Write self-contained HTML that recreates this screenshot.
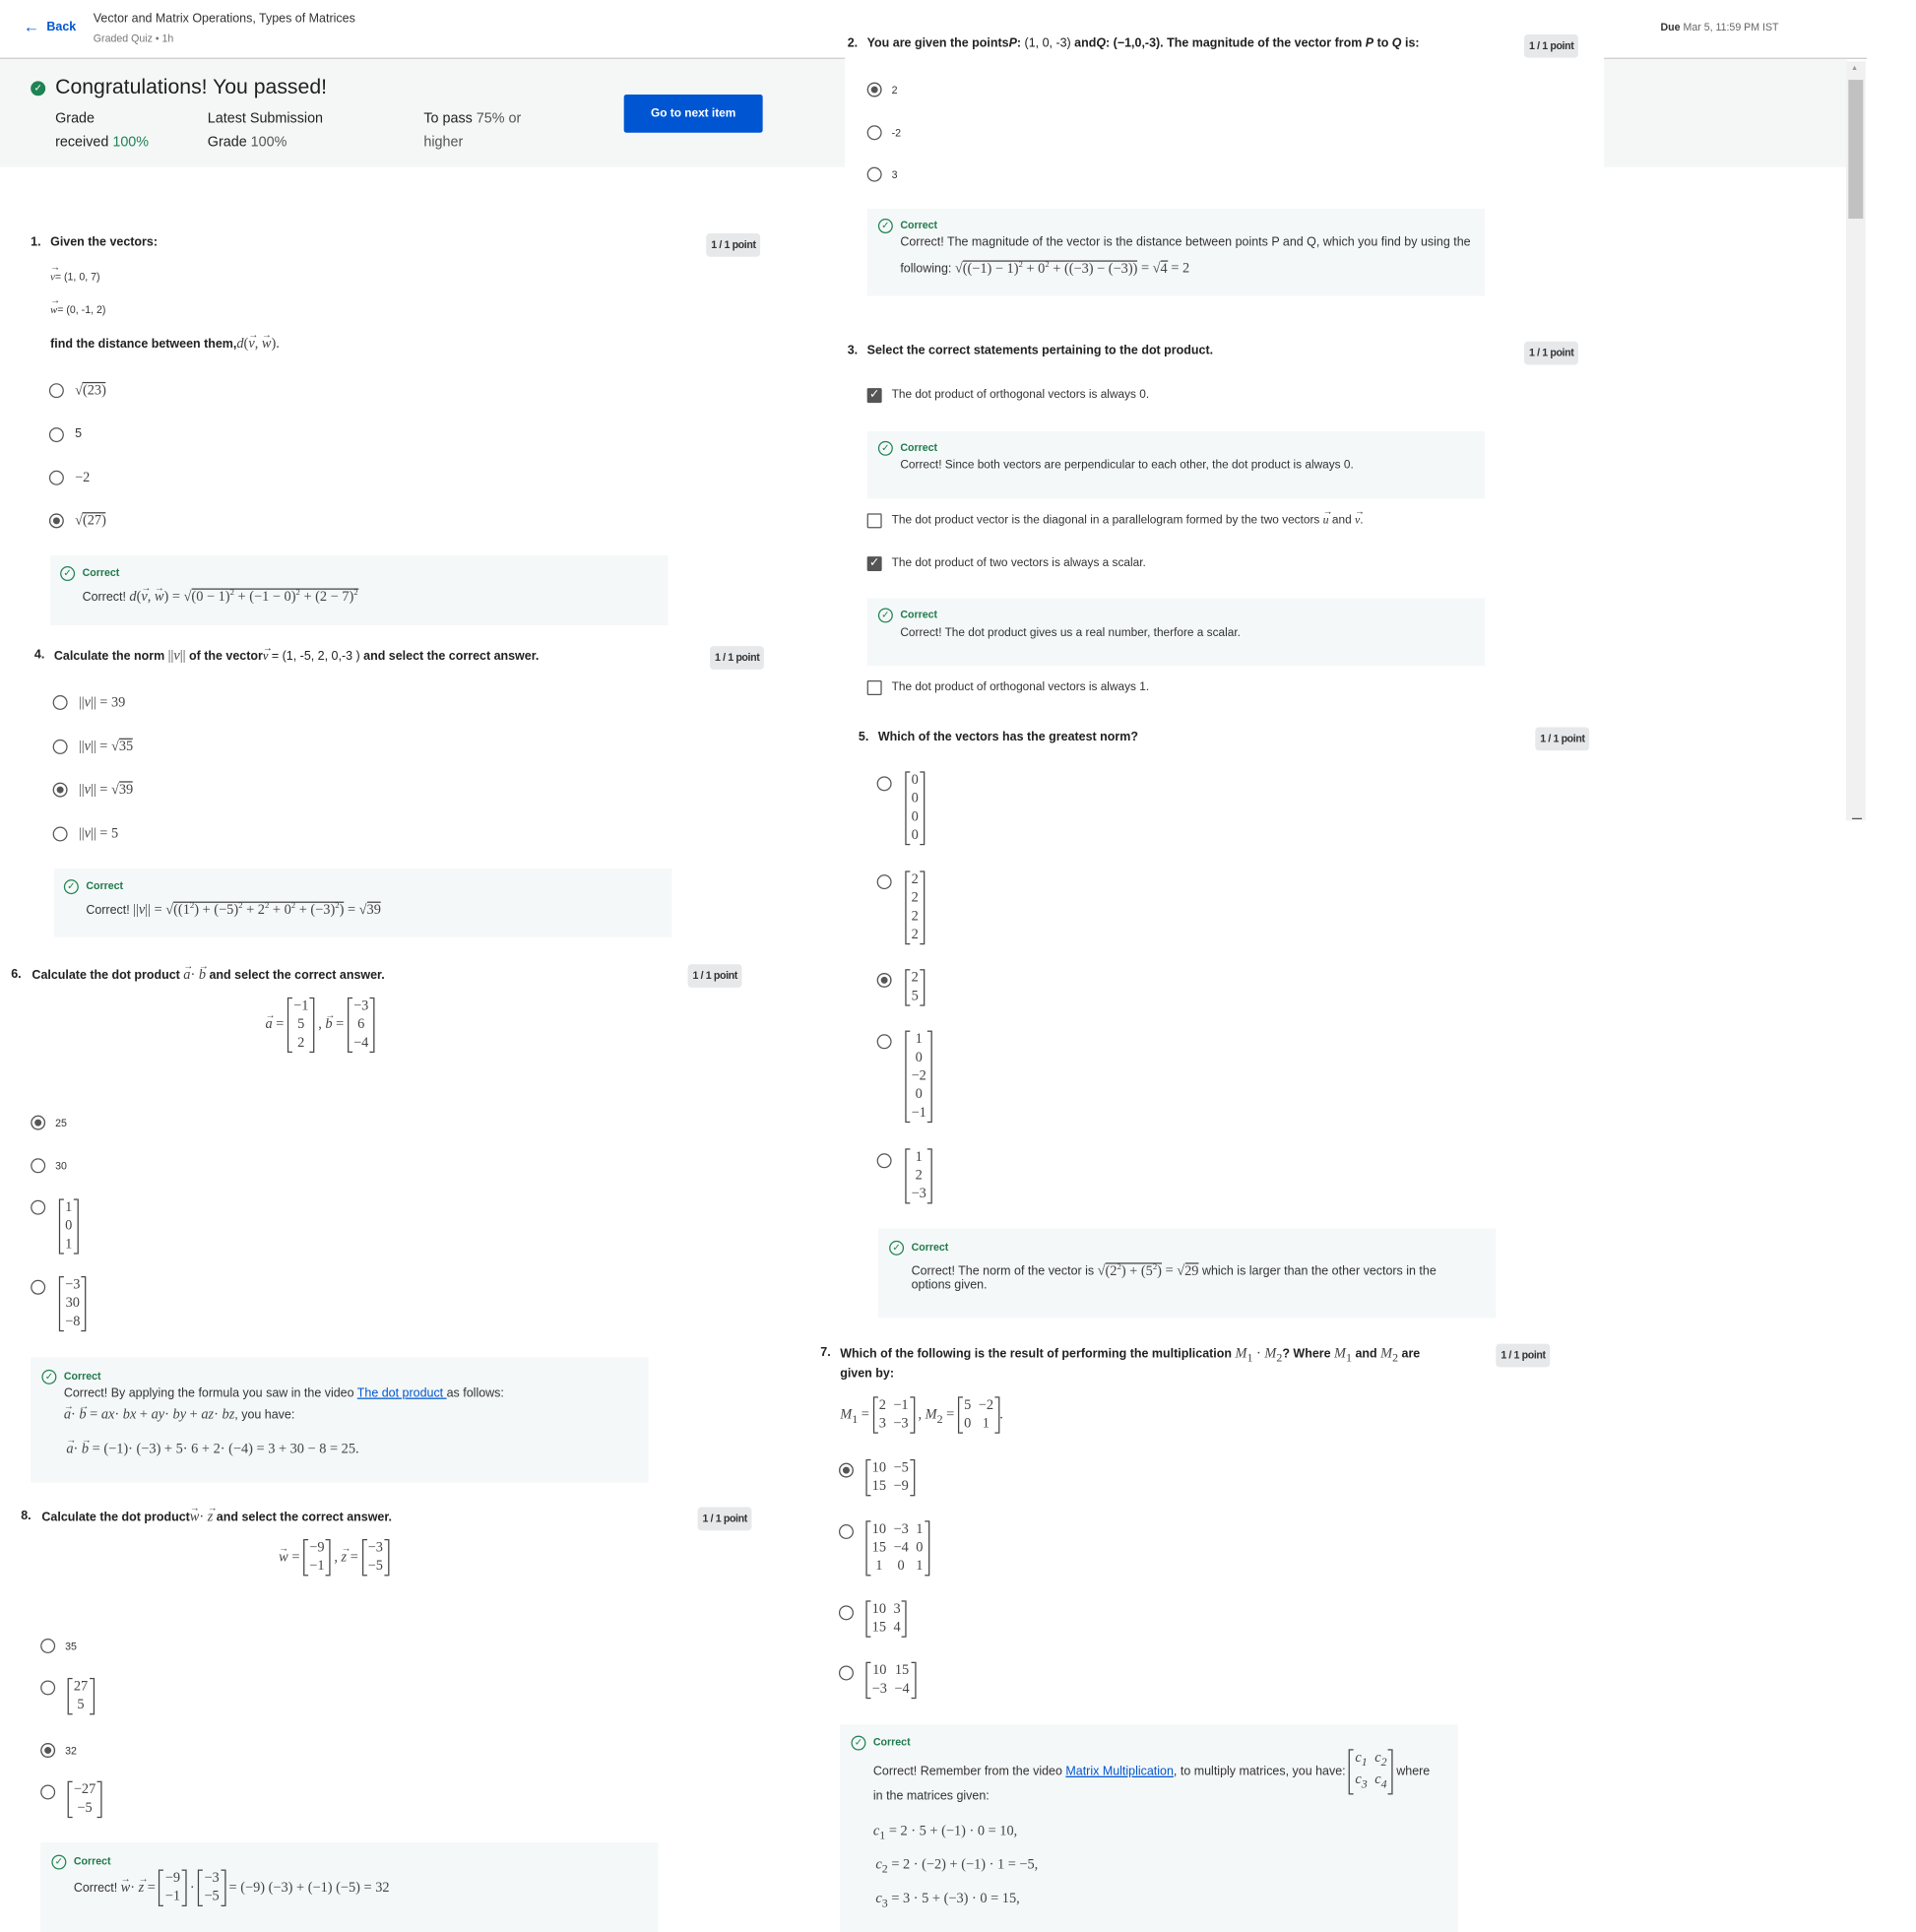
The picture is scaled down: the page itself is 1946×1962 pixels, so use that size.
<!DOCTYPE html>
<html><head><meta charset="utf-8"><style>
html,body{margin:0;padding:0;background:#fff;width:1946px;height:1962px;overflow:hidden}
#w{position:absolute;left:0;top:0;width:1560px;height:1573px;transform:scale(1.2474);transform-origin:0 0;font-family:"Liberation Sans",sans-serif;color:#333;font-size:10px;letter-spacing:0}
.a{position:absolute;white-space:nowrap;line-height:14px}
.b{font-weight:bold;color:#222}
.badge{position:absolute;background:#e6e8e9;border-radius:3px;font-size:8.5px;font-weight:bold;color:#333;height:19px;line-height:19px;padding:0 4px;letter-spacing:-0.3px}
.r{position:absolute;width:10px;height:10px;border:1.4px solid #555;border-radius:50%;box-sizing:content-box}
.r.s{background:#555;box-shadow:inset 0 0 0 2.2px #fff}
.cb{position:absolute;width:10px;height:10px;border:1.4px solid #555;border-radius:1px}
.cb.s{background:#555;color:#fff;font-size:10px;line-height:10px;text-align:center}
.fb{position:absolute;background:#f5f8f8}
.ci{position:absolute;width:10px;height:10px;border:1px solid #1f8354;border-radius:50%;color:#1f8354;font-size:8px;line-height:10px;text-align:center}
.ct{color:#1f7a4d;font-weight:bold;font-size:8.5px}
.mt{font-family:"Liberation Serif",serif;font-size:11.5px;color:#444;letter-spacing:0;font-weight:normal}
.v{position:relative;display:inline-block;font-family:"Liberation Serif",serif;font-style:italic;font-weight:normal}
.v:after{content:'→';position:absolute;left:0;top:-7px;font-size:8px;font-style:normal}
.m{display:inline-block;position:relative;border-left:1px solid #444;border-right:1px solid #444;padding:0 1px;vertical-align:middle}
.m:before,.m:after{content:'';position:absolute;top:0;bottom:0;width:3px;border-top:1px solid #444;border-bottom:1px solid #444}
.m:before{left:0}.m:after{right:0}
.m table{border-collapse:collapse;border-spacing:0}
.m td{font-family:"Liberation Serif",serif;font-size:11.5px;color:#444;padding:0 3px;line-height:15px;text-align:center}
.ol{border-top:1px solid #444}
a{color:#0056d2}
sup{font-size:7px}
</style></head><body><div id="w">

<!-- header -->
<div class="a" style="left:19px;top:15px;color:#0056d2;font-size:13px">&#8592;</div>
<div class="a" style="left:38px;top:16px;color:#0056d2;font-weight:bold;font-size:10px">Back</div>
<div class="a" style="left:76px;top:9px;font-size:10px">Vector and Matrix Operations, Types of Matrices</div>
<div class="a" style="left:76px;top:24px;font-size:8.5px;color:#777">Graded Quiz • 1h</div>
<div class="a" style="left:1352px;top:15px;font-size:8.5px"><b>Due</b> <span style="color:#666">Mar 5, 11:59 PM IST</span></div>
<div style="position:absolute;left:0;top:47px;width:688px;height:1px;background:#c8c8c8"></div>
<div style="position:absolute;left:1306px;top:47px;width:214px;height:1px;background:#c8c8c8"></div>

<!-- banner -->
<div style="position:absolute;left:0;top:48px;width:688px;height:88px;background:#f5f7f7"></div>
<div style="position:absolute;left:1306px;top:48px;width:198px;height:88px;background:#f5f7f7"></div>
<div style="position:absolute;left:25px;top:66px;width:12px;height:12px;border-radius:50%;background:#1f8354;color:#fff;font-size:8px;line-height:12px;text-align:center">✓</div>
<div class="a" style="left:45px;top:61px;font-size:17px;line-height:20px;color:#1f1f1f">Congratulations! You passed!</div>
<div class="a" style="left:45px;top:88px;font-size:11.5px;line-height:19px;color:#222">Grade<br>received <span style="color:#1f8354">100%</span></div>
<div class="a" style="left:169px;top:88px;font-size:11.5px;line-height:19px;color:#222">Latest Submission<br>Grade <span style="color:#555">100%</span></div>
<div class="a" style="left:345px;top:88px;font-size:11.5px;line-height:19px;color:#222">To pass <span style="color:#555">75% or</span><br><span style="color:#555">higher</span></div>
<div style="position:absolute;left:508px;top:77px;width:113px;height:31px;background:#0056d2;border-radius:2px;color:#fff;font-weight:bold;font-size:9.5px;text-align:center;line-height:31px">Go to next item</div>

<!-- scrollbar -->
<div style="position:absolute;left:1503px;top:50px;width:16px;height:618px;background:#f1f1f1"></div>
<div style="position:absolute;left:1505px;top:65px;width:12px;height:113px;background:#c1c1c1"></div>
<div class="a" style="left:1507px;top:49px;font-size:6px;color:#999">▲</div>
<div style="position:absolute;left:1508px;top:666px;width:8px;height:1px;background:#555"></div>

<!-- Q1 -->
<div class="a b" style="left:25px;top:191px">1.</div>
<div class="a b" style="left:41px;top:191px">Given the vectors:</div>
<div class="badge" style="left:575px;top:190px">1 / 1 point</div>
<div class="a" style="left:41px;top:218px;font-size:8.5px"><span class="v">v</span>= (1, 0, 7)</div>
<div class="a" style="left:41px;top:245px;font-size:8.5px"><span class="v">w</span>= (0, -1, 2)</div>
<div class="a b" style="left:41px;top:273px">find the distance between them,<span class="mt"><i>d</i>(<span class="v">v</span>, <span class="v">w</span>).</span></div>
<div class="r" style="left:40px;top:312px"></div><div class="a mt" style="left:61px;top:311px">√<span class="ol">(23)</span></div>
<div class="r" style="left:40px;top:348px"></div><div class="a" style="left:61px;top:347px">5</div>
<div class="r" style="left:40px;top:383px"></div><div class="a mt" style="left:61px;top:382px">−2</div>
<div class="r s" style="left:40px;top:418px"></div><div class="a mt" style="left:61px;top:417px">√<span class="ol">(27)</span></div>
<div class="fb" style="left:41px;top:452px;width:503px;height:57px"></div>
<div class="ci" style="left:49px;top:461px">✓</div><div class="a ct" style="left:67px;top:459px">Correct</div>
<div class="a" style="left:67px;top:475px">Correct! <span class="mt"><i>d</i>(<span class="v">v</span>, <span class="v">w</span>) = √<span class="ol">(0 − 1)<sup>2</sup> + (−1 − 0)<sup>2</sup> + (2 − 7)<sup>2</sup></span></span></div>

<!-- Q4 -->
<div class="a b" style="left:28px;top:527px">4.</div>
<div class="a b" style="left:44px;top:527px">Calculate the norm <span class="mt">||<i>v</i>||</span> of the vector<span class="v">v</span><span style="font-weight:normal"> = (1, -5, 2, 0,-3 )</span> and select the correct answer.</div>
<div class="badge" style="left:578px;top:526px">1 / 1 point</div>
<div class="r" style="left:43px;top:566px"></div><div class="a mt" style="left:64px;top:565px">||<i>v</i>|| = 39</div>
<div class="r" style="left:43px;top:602px"></div><div class="a mt" style="left:64px;top:601px">||<i>v</i>|| = √<span class="ol">35</span></div>
<div class="r s" style="left:43px;top:637px"></div><div class="a mt" style="left:64px;top:636px">||<i>v</i>|| = √<span class="ol">39</span></div>
<div class="r" style="left:43px;top:673px"></div><div class="a mt" style="left:64px;top:672px">||<i>v</i>|| = 5</div>
<div class="fb" style="left:44px;top:707px;width:503px;height:56px"></div>
<div class="ci" style="left:52px;top:716px">✓</div><div class="a ct" style="left:70px;top:714px">Correct</div>
<div class="a" style="left:70px;top:730px">Correct! <span class="mt">||<i>v</i>|| = √<span class="ol">((1<sup>2</sup>) + (−5)<sup>2</sup> + 2<sup>2</sup> + 0<sup>2</sup> + (−3)<sup>2</sup>)</span> = √<span class="ol">39</span></span></div>

<!-- Q6 -->
<div class="a b" style="left:9px;top:787px">6.</div>
<div class="a b" style="left:26px;top:787px">Calculate the dot product <span class="mt"><span class="v">a</span>· <span class="v">b</span></span> and select the correct answer.</div>
<div class="badge" style="left:560px;top:785px">1 / 1 point</div>
<div class="a mt" style="left:216px;top:810px;line-height:48px"><span class="v">a</span> = <span class="m"><table><tr><td>−1</td></tr><tr><td>5</td></tr><tr><td>2</td></tr></table></span> , <span class="v">b</span> = <span class="m"><table><tr><td>−3</td></tr><tr><td>6</td></tr><tr><td>−4</td></tr></table></span></div>
<div class="r s" style="left:25px;top:908px"></div><div class="a" style="left:45px;top:907px;font-size:8.5px">25</div>
<div class="r" style="left:25px;top:943px"></div><div class="a" style="left:45px;top:942px;font-size:8.5px">30</div>
<div class="r" style="left:25px;top:977px"></div><div class="a" style="left:48px;top:976px"><span class="m"><table><tr><td>1</td></tr><tr><td>0</td></tr><tr><td>1</td></tr></table></span></div>
<div class="r" style="left:25px;top:1042px"></div><div class="a" style="left:48px;top:1039px"><span class="m"><table><tr><td>−3</td></tr><tr><td>30</td></tr><tr><td>−8</td></tr></table></span></div>
<div class="fb" style="left:25px;top:1105px;width:503px;height:102px"></div>
<div class="ci" style="left:34px;top:1115px">✓</div><div class="a ct" style="left:52px;top:1113px">Correct</div>
<div class="a" style="left:52px;top:1128px">Correct! By applying the formula you saw in the video <a href="#">The dot product </a>as follows:</div>
<div class="a" style="left:52px;top:1145px"><span class="mt"><span class="v">a</span>· <span class="v">b</span> = <i>ax</i>· <i>bx</i> + <i>ay</i>· <i>by</i> + <i>az</i>· <i>bz</i></span>, you have:</div>
<div class="a mt" style="left:54px;top:1173px"><span class="v">a</span>· <span class="v">b</span> = (−1)· (−3) + 5· 6 + 2· (−4) = 3 + 30 − 8 = 25.</div>

<!-- Q8 -->
<div class="a b" style="left:17px;top:1228px">8.</div>
<div class="a b" style="left:34px;top:1228px">Calculate the dot product<span class="mt"><span class="v">w</span>· <span class="v">z</span></span> and select the correct answer.</div>
<div class="badge" style="left:568px;top:1227px">1 / 1 point</div>
<div class="a mt" style="left:227px;top:1252px;line-height:32px"><span class="v">w</span> = <span class="m"><table><tr><td>−9</td></tr><tr><td>−1</td></tr></table></span> , <span class="v">z</span> = <span class="m"><table><tr><td>−3</td></tr><tr><td>−5</td></tr></table></span></div>
<div class="r" style="left:33px;top:1334px"></div><div class="a" style="left:53px;top:1333px;font-size:8.5px">35</div>
<div class="r" style="left:33px;top:1368px"></div><div class="a" style="left:55px;top:1366px"><span class="m"><table><tr><td>27</td></tr><tr><td>5</td></tr></table></span></div>
<div class="r s" style="left:33px;top:1419px"></div><div class="a" style="left:53px;top:1418px;font-size:8.5px">32</div>
<div class="r" style="left:33px;top:1453px"></div><div class="a" style="left:55px;top:1450px"><span class="m"><table><tr><td>−27</td></tr><tr><td>−5</td></tr></table></span></div>
<div class="fb" style="left:33px;top:1500px;width:503px;height:73px"></div>
<div class="ci" style="left:42px;top:1510px">✓</div><div class="a ct" style="left:60px;top:1508px">Correct</div>
<div class="a" style="left:60px;top:1521px;line-height:32px">Correct! <span class="mt"><span class="v">w</span>· <span class="v">z</span> = <span class="m"><table><tr><td>−9</td></tr><tr><td>−1</td></tr></table></span> · <span class="m"><table><tr><td>−3</td></tr><tr><td>−5</td></tr></table></span> = (−9) (−3) + (−1) (−5) = 32</span></div>

<!-- Q2 -->
<div class="a b" style="left:690px;top:29px">2.</div>
<div class="a b" style="left:706px;top:29px">You are given the points<i>P</i>: <span style="font-weight:normal">(1, 0, -3)</span> and<i>Q</i>: (−1,0,-3). The magnitude of the vector from <i>P</i> to <i>Q</i> is:</div>
<div class="badge" style="left:1241px;top:28px">1 / 1 point</div>
<div class="r s" style="left:706px;top:67px"></div><div class="a" style="left:726px;top:66px;font-size:8.5px">2</div>
<div class="r" style="left:706px;top:102px"></div><div class="a" style="left:726px;top:101px;font-size:8.5px">-2</div>
<div class="r" style="left:706px;top:136px"></div><div class="a" style="left:726px;top:135px;font-size:8.5px">3</div>
<div class="fb" style="left:706px;top:170px;width:503px;height:71px"></div>
<div class="ci" style="left:715px;top:178px">✓</div><div class="a ct" style="left:733px;top:176px">Correct</div>
<div class="a" style="left:733px;top:191px">Correct! The magnitude of the vector is the distance between points P and Q, which you find by using the</div>
<div class="a" style="left:733px;top:208px">following: <span class="mt">√<span class="ol">((−1) − 1)<sup>2</sup> + 0<sup>2</sup> + ((−3) − (−3))</span> = √<span class="ol">4</span> = 2</span></div>

<!-- Q3 -->
<div class="a b" style="left:690px;top:279px">3.</div>
<div class="a b" style="left:706px;top:279px">Select the correct statements pertaining to the dot product.</div>
<div class="badge" style="left:1241px;top:278px">1 / 1 point</div>
<div class="cb s" style="left:706px;top:316px">✓</div><div class="a" style="left:726px;top:315px;font-size:9.5px">The dot product of orthogonal vectors is always 0.</div>
<div class="fb" style="left:706px;top:351px;width:503px;height:55px"></div>
<div class="ci" style="left:715px;top:359px">✓</div><div class="a ct" style="left:733px;top:357px">Correct</div>
<div class="a" style="left:733px;top:372px;font-size:9.5px">Correct! Since both vectors are perpendicular to each other, the dot product is always 0.</div>
<div class="cb" style="left:706px;top:418px"></div><div class="a" style="left:726px;top:417px;font-size:9.5px">The dot product vector is the diagonal in a parallelogram formed by the two vectors <span class="v">u</span> and <span class="v">v</span>.</div>
<div class="cb s" style="left:706px;top:453px">✓</div><div class="a" style="left:726px;top:452px;font-size:9.5px">The dot product of two vectors is always a scalar.</div>
<div class="fb" style="left:706px;top:487px;width:503px;height:55px"></div>
<div class="ci" style="left:715px;top:495px">✓</div><div class="a ct" style="left:733px;top:493px">Correct</div>
<div class="a" style="left:733px;top:509px;font-size:9.5px">Correct! The dot product gives us a real number, therfore a scalar.</div>
<div class="cb" style="left:706px;top:554px"></div><div class="a" style="left:726px;top:553px;font-size:9.5px">The dot product of orthogonal vectors is always 1.</div>

<!-- Q5 -->
<div class="a b" style="left:699px;top:594px">5.</div>
<div class="a b" style="left:715px;top:594px">Which of the vectors has the greatest norm?</div>
<div class="badge" style="left:1250px;top:592px">1 / 1 point</div>
<div class="r" style="left:714px;top:632px"></div><div class="a" style="left:737px;top:628px"><span class="m"><table><tr><td>0</td></tr><tr><td>0</td></tr><tr><td>0</td></tr><tr><td>0</td></tr></table></span></div>
<div class="r" style="left:714px;top:712px"></div><div class="a" style="left:737px;top:709px"><span class="m"><table><tr><td>2</td></tr><tr><td>2</td></tr><tr><td>2</td></tr><tr><td>2</td></tr></table></span></div>
<div class="r s" style="left:714px;top:792px"></div><div class="a" style="left:737px;top:789px"><span class="m"><table><tr><td>2</td></tr><tr><td>5</td></tr></table></span></div>
<div class="r" style="left:714px;top:842px"></div><div class="a" style="left:737px;top:839px"><span class="m"><table><tr><td>1</td></tr><tr><td>0</td></tr><tr><td>−2</td></tr><tr><td>0</td></tr><tr><td>−1</td></tr></table></span></div>
<div class="r" style="left:714px;top:939px"></div><div class="a" style="left:737px;top:935px"><span class="m"><table><tr><td>1</td></tr><tr><td>2</td></tr><tr><td>−3</td></tr></table></span></div>
<div class="fb" style="left:715px;top:1000px;width:503px;height:73px"></div>
<div class="ci" style="left:724px;top:1010px">✓</div><div class="a ct" style="left:742px;top:1008px">Correct</div>
<div class="a" style="left:742px;top:1024px">Correct! The norm of the vector is <span class="mt">√<span class="ol">(2<sup>2</sup>) + (5<sup>2</sup>)</span> = √<span class="ol">29</span></span> which is larger than the other vectors in the</div>
<div class="a" style="left:742px;top:1040px">options given.</div>

<!-- Q7 -->
<div class="a b" style="left:668px;top:1095px">7.</div>
<div class="a b" style="left:684px;top:1095px">Which of the following is the result of performing the multiplication <span class="mt"><i>M</i><sub>1</sub> · <i>M</i><sub>2</sub></span>? Where <span class="mt"><i>M</i><sub>1</sub></span> and <span class="mt"><i>M</i><sub>2</sub></span> are</div>
<div class="a b" style="left:684px;top:1112px">given by:</div>
<div class="badge" style="left:1218px;top:1094px">1 / 1 point</div>
<div class="a mt" style="left:684px;top:1136px;line-height:32px"><i>M</i><sub>1</sub> = <span class="m"><table><tr><td>2</td><td>−1</td></tr><tr><td>3</td><td>−3</td></tr></table></span> , <i>M</i><sub>2</sub> = <span class="m"><table><tr><td>5</td><td>−2</td></tr><tr><td>0</td><td>1</td></tr></table></span>.</div>
<div class="r s" style="left:683px;top:1191px"></div><div class="a" style="left:705px;top:1188px"><span class="m"><table><tr><td>10</td><td>−5</td></tr><tr><td>15</td><td>−9</td></tr></table></span></div>
<div class="r" style="left:683px;top:1241px"></div><div class="a" style="left:705px;top:1238px"><span class="m"><table><tr><td>10</td><td>−3</td><td>1</td></tr><tr><td>15</td><td>−4</td><td>0</td></tr><tr><td>1</td><td>0</td><td>1</td></tr></table></span></div>
<div class="r" style="left:683px;top:1307px"></div><div class="a" style="left:705px;top:1303px"><span class="m"><table><tr><td>10</td><td>3</td></tr><tr><td>15</td><td>4</td></tr></table></span></div>
<div class="r" style="left:683px;top:1356px"></div><div class="a" style="left:705px;top:1353px"><span class="m"><table><tr><td>10</td><td>15</td></tr><tr><td>−3</td><td>−4</td></tr></table></span></div>
<div class="fb" style="left:684px;top:1404px;width:503px;height:169px"></div>
<div class="ci" style="left:693px;top:1413px">✓</div><div class="a ct" style="left:711px;top:1411px">Correct</div>
<div class="a" style="left:711px;top:1424px;line-height:32px">Correct! Remember from the video <a href="#">Matrix Multiplication</a>, to multiply matrices, you have: <span class="m" style="font-style:italic"><table><tr><td>c<sub>1</sub></td><td>c<sub>2</sub></td></tr><tr><td>c<sub>3</sub></td><td>c<sub>4</sub></td></tr></table></span> where</div>
<div class="a" style="left:711px;top:1456px">in the matrices given:</div>
<div class="a mt" style="left:711px;top:1484px"><i>c</i><sub>1</sub> = 2 · 5 + (−1) · 0 = 10,</div>
<div class="a mt" style="left:713px;top:1511px"><i>c</i><sub>2</sub> = 2 · (−2) + (−1) · 1 = −5,</div>
<div class="a mt" style="left:713px;top:1539px"><i>c</i><sub>3</sub> = 3 · 5 + (−3) · 0 = 15,</div>

</div></body></html>
